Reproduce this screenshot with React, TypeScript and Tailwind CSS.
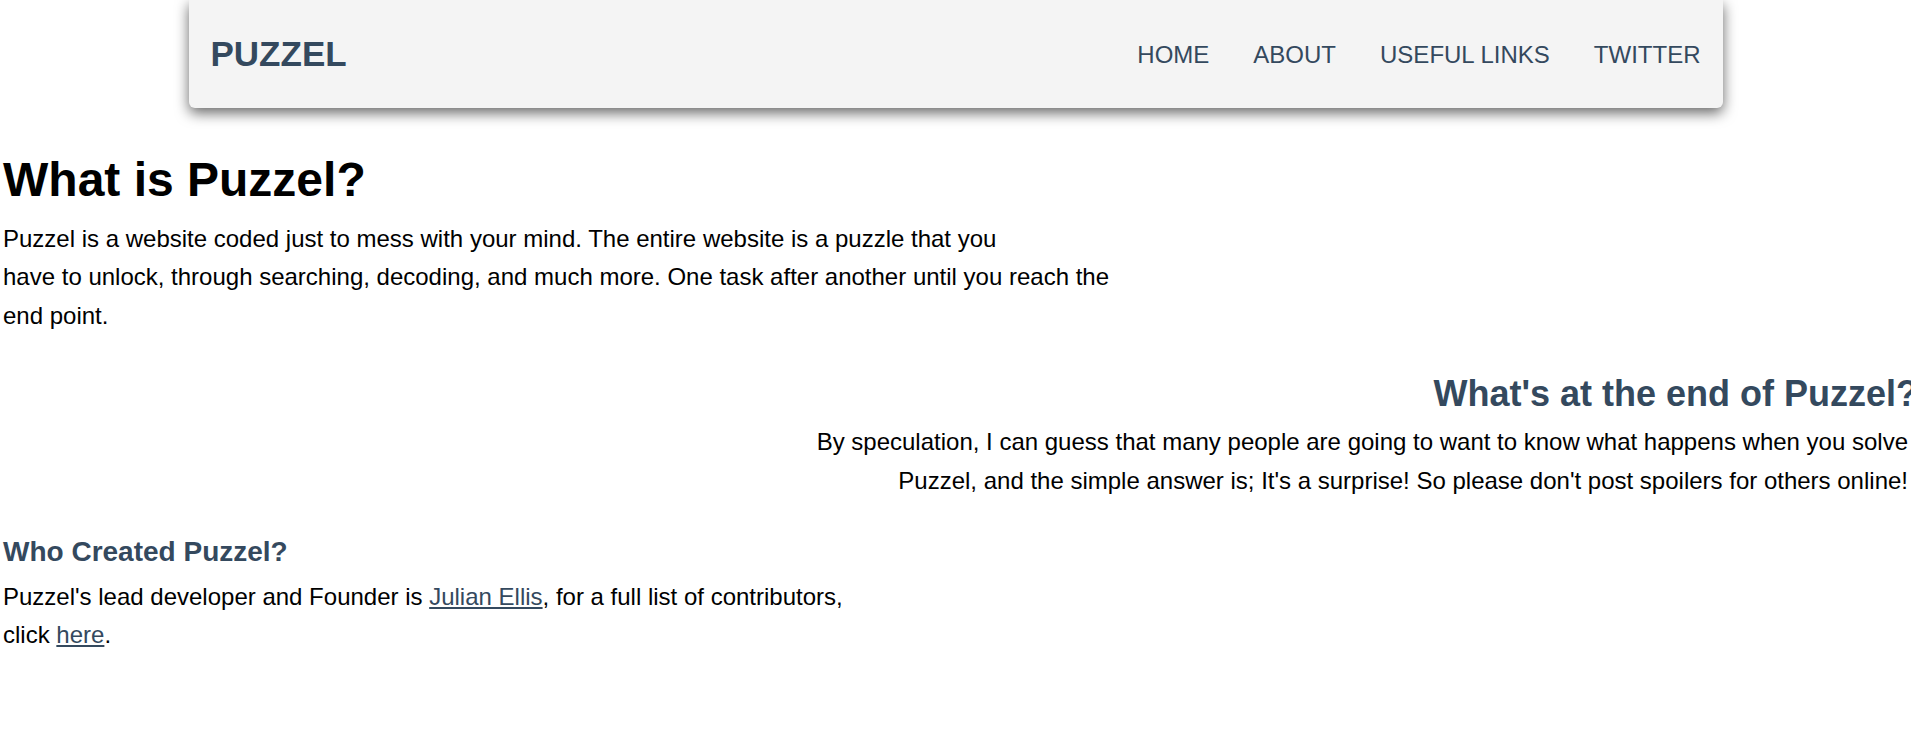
export default function App() {
  const links = ["HOME", "ABOUT", "USEFUL LINKS", "TWITTER"];

  return (
    <div className="min-h-screen overflow-hidden bg-white font-['Liberation_Sans',Arial,sans-serif] text-[24px] text-black">
      {/* Navbar */}
      <nav className="mx-auto flex h-[108px] w-[1534px] items-center justify-between rounded-b-md bg-[#f4f4f4] pl-[22px] pr-[22px] shadow-[0_5px_14px_rgba(0,0,0,0.6)]">
        <a href="#" className="text-[35px] font-bold text-[#34495e]">
          PUZZEL
        </a>
        <ul className="flex items-center gap-[44px] pt-[2px]">
          {links.map((link) => (
            <li key={link}>
              <a href="#" className="text-[24px] text-[#34495e]">
                {link}
              </a>
            </li>
          ))}
        </ul>
      </nav>

      {/* Content */}
      <main className="px-[3px]">
        <section className="mt-[44px] w-[60%]">
          <h1 className="text-[48px] font-bold leading-[56px]">What is Puzzel?</h1>
          <p className="mt-[12px] leading-[38.4px]">
            Puzzel is a website coded just to mess with your mind. The entire website is a puzzle that you
            <br />
            have to unlock, through searching, decoding, and much more. One task after another until you reach the end point.
          </p>
        </section>

        <section className="ml-auto mt-[38px] w-[60%] text-right">
          <h2 className="mr-[-10px] whitespace-nowrap text-[36px] font-bold leading-[42px] text-[#34495e]">
            What's at the end of Puzzel?
          </h2>
          <p className="mt-[8px] leading-[38.4px]">
            By speculation, I can guess that many people are going to want to know what happens when you solve Puzzel, and the simple answer is; It's a surprise! So please don't post spoilers for others online!
          </p>
        </section>

        <section className="mt-[35px] w-[45%]">
          <h3 className="text-[28px] font-bold leading-[34px] text-[#34495e]">Who Created Puzzel?</h3>
          <p className="mt-[9px] leading-[38.4px]">
            Puzzel's lead developer and Founder is{" "}
            <a href="#" className="text-[#34495e] underline">
              Julian Ellis
            </a>
            , for a full list of contributors, click{" "}
            <a href="#" className="text-[#34495e] underline">
              here
            </a>
            .
          </p>
        </section>
      </main>
    </div>
  );
}
